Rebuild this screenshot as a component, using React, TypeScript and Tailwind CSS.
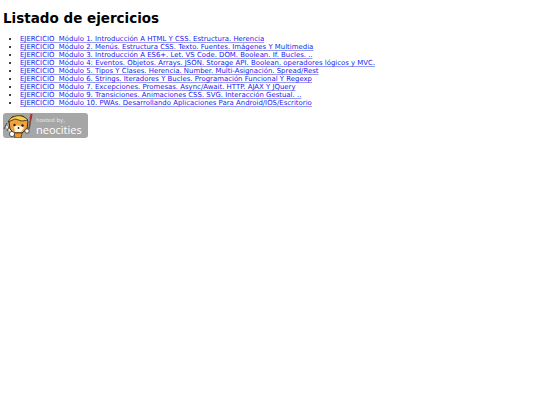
// App.tsx
const ITEMS = [
  'EJERCICIO\u00a0\u00a0Módulo 1. Introducción A HTML Y CSS. Estructura. Herencia',
  'EJERCICIO\u00a0\u00a0Módulo 2. Menús. Estructura CSS. Texto. Fuentes. Imágenes Y Multimedia',
  'EJERCICIO\u00a0\u00a0Módulo 3. Introducción A ES6+. Let. VS Code. DOM. Boolean. If. Bucles. ..',
  'EJERCICIO\u00a0\u00a0Módulo 4: Eventos. Objetos. Arrays. JSON. Storage API. Boolean. operadores lógicos y MVC.',
  'EJERCICIO\u00a0\u00a0Módulo 5. Tipos Y Clases. Herencia. Number. Multi-Asignación. Spread/Rest',
  'EJERCICIO\u00a0\u00a0Módulo 6. Strings. Iteradores Y Bucles. Programación Funcional Y Regexp',
  'EJERCICIO\u00a0\u00a0Módulo 7. Excepciones. Promesas. Async/Await. HTTP. AJAX Y JQuery',
  'EJERCICIO\u00a0\u00a0Módulo 9. Transiciones. Animaciones CSS. SVG. Interacción Gestual. ..',
  'EJERCICIO\u00a0\u00a0Módulo 10. PWAs. Desarrollando Aplicaciones Para Android/IOS/Escritorio',
];

function Mascot() {
  return (
    <svg width="31" height="25" viewBox="0 0 31 25" className="shrink-0">
      {/* brush */}
      <path d="M28 4 L26 16" stroke="#7a4a3a" strokeWidth="1.6" />
      <path d="M28.5 1 L27.5 6" stroke="#a33" strokeWidth="2.2" />
      {/* fork */}
      <path d="M3 13 L9 20" stroke="#eee" strokeWidth="1.8" />
      <path d="M1 16 L4 10 M4 18 L7 12" stroke="#444" strokeWidth="1" />
      {/* head */}
      <path d="M6 9 L9 4 L20 3 L25 8 L24 16 L19 20 L11 20 L7 16 Z" fill="#f0a23c" stroke="#3a2a1a" strokeWidth="1" />
      {/* hat */}
      <path d="M5 9 C8 2 19 0 25 7 L19 8 L12 6 Z" fill="#f7cf4a" stroke="#3a2a1a" strokeWidth="0.8" />
      {/* face */}
      <path d="M11 14 C13 12 18 12 21 15 L18 19 L12 19 Z" fill="#fff4e2" />
      <circle cx="11.5" cy="12" r="1.2" fill="#222" />
      <circle cx="19.5" cy="12.5" r="1.2" fill="#222" />
      <circle cx="15.5" cy="15" r="0.9" fill="#222" />
      {/* paws */}
      <path d="M11 20 L19 20 L18 25 L12 25 Z" fill="#e8962f" stroke="#3a2a1a" strokeWidth="0.7" />
      <circle cx="9" cy="21" r="2.6" fill="#fff" stroke="#333" strokeWidth="0.8" />
      <circle cx="24" cy="18" r="2.2" fill="#fff" stroke="#333" strokeWidth="0.8" />
    </svg>
  );
}

export default function App() {
  return (
    <div className="min-h-[405px] bg-white px-[3px] pt-[10px] font-['DejaVu_Sans','Liberation_Sans',sans-serif] text-black">
      <h1 className="text-[13.5px] leading-[16px] font-bold">Listado de ejercicios</h1>
      <ul className="mt-[9px] ml-[17px] list-disc text-[6.93px] leading-[8px]">
        {ITEMS.map(item => (
          <li key={item}>
            <a href="#" className="text-[#1a1aee] underline decoration-[#9a9af5]">{item}</a>
          </li>
        ))}
      </ul>
      <a href="#" className="mt-[6px] flex h-[25px] w-[85px] items-center overflow-hidden rounded-[3px] bg-[#a6a6a6] text-white">
        <Mascot />
        <span className="ml-[2px] flex flex-col gap-[1px]">
          <span className="text-[5.5px] leading-[6px] text-[#e6e6e6]">hosted by,</span>
          <span className="font-['Open_Sans','Liberation_Sans',sans-serif] text-[11px] leading-[11px]">neocities</span>
        </span>
      </a>
    </div>
  );
}
